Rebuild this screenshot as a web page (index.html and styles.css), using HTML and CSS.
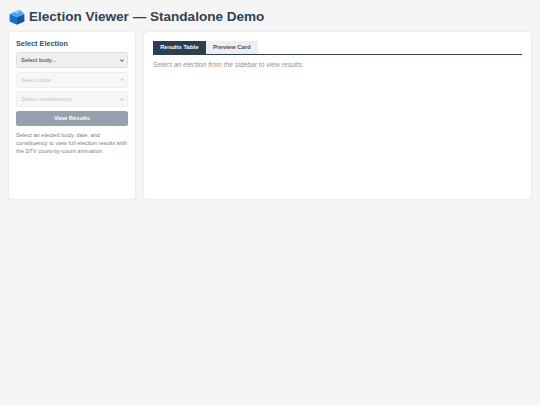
FILE: index.html
```html
<!DOCTYPE html>
<html lang="en">
<head>
<meta charset="utf-8">
<title>Election Viewer — Standalone Demo</title>
<link rel="stylesheet" href="styles.css">
</head>
<body>
<header class="page-header">
  <svg class="logo" viewBox="0 0 16 16" width="16" height="16" aria-hidden="true">
    <path d="M0.6 5 L8 8 V15.8 L0.6 12.4 Z" fill="#1a6fc9"/>
    <path d="M15.4 5 L8 8 V15.8 L15.4 12.4 Z" fill="#0f56a8"/>
    <path d="M0.6 5 L6 2.8 L8 4.6 L11 1 L15.4 5 L8 8 Z" fill="#4aa3ec"/>
    <path d="M6 2.8 L9 0.6 L11 1 L8 4.6 Z" fill="#8ed0f8"/>
  </svg>
  <h1 class="title">Election Viewer — Standalone Demo</h1>
</header>
<main class="layout">
  <aside class="card sidebar">
    <h2 class="sidebar-title">Select Election</h2>
    <select class="field"><option>Select body...</option></select>
    <select class="field" disabled><option>Select date...</option></select>
    <select class="field" disabled><option>Select constituency...</option></select>
    <button class="view-btn" disabled>View Results</button>
    <p class="help">Select an elected body, date, and constituency to view full election results with the STV count-by-count animation.</p>
  </aside>
  <section class="card content">
    <div class="tabs">
      <div class="tab tab-active">Results Table</div>
      <div class="tab">Preview Card</div>
    </div>
    <p class="placeholder">Select an election from the sidebar to view results.</p>
  </section>
</main>
</body>
</html>
```
FILE: styles.css
```css
* { box-sizing: border-box; }
html, body { height: 100%; }
body {
  margin: 0;
  padding: 9px;
  background: #f5f5f5;
  color: #2c3e50;
  font-family: "Liberation Sans", Arial, sans-serif;
}
.page-header {
  display: flex;
  align-items: center;
  gap: 4px;
  height: 16px;
  margin-bottom: 7px;
}
.logo { flex: none; }
.title {
  margin: 0;
  font-size: 13.55px;
  line-height: 16px;
  font-weight: 700;
  color: #2f4254;
}
.layout {
  display: grid;
  grid-template-columns: 126px 387px;
  gap: 9px;
  align-items: stretch;
  height: 167px;
}
.card {
  background: #fff;
  border-radius: 4px;
  box-shadow: 0 0 2px rgba(0, 0, 0, 0.12);
}
.sidebar {
  padding: 7px;
  display: flex;
  flex-direction: column;
}
.sidebar-title {
  margin: 0 0 4px;
  font-size: 7.3px;
  line-height: 9px;
  font-weight: 700;
  color: #3a4c5e;
}
.field {
  appearance: none;
  -webkit-appearance: none;
  display: block;
  width: 100%;
  height: 16px;
  margin: 0 0 3.5px;
  padding: 0 10px 0 4px;
  font-family: "Liberation Sans", Arial, sans-serif;
  font-size: 5.9px;
  border: 1px solid #e0e0e0;
  border-radius: 2.5px;
  background-color: #efefef;
  background-image: url("data:image/svg+xml,%3Csvg xmlns='http://www.w3.org/2000/svg' viewBox='0 0 8 5'%3E%3Cpath d='M1 1 L4 4 L7 1' fill='none' stroke='%23222' stroke-width='1.6'/%3E%3C/svg%3E");
  background-repeat: no-repeat;
  background-position: right 3px center;
  background-size: 4px 2.5px;
  color: #333;
}
.field:disabled {
  background-color: #f4f4f4;
  background-image: url("data:image/svg+xml,%3Csvg xmlns='http://www.w3.org/2000/svg' viewBox='0 0 8 5'%3E%3Cpath d='M1 1 L4 4 L7 1' fill='none' stroke='%23999' stroke-width='1.6'/%3E%3C/svg%3E");
  color: #aaa;
  border-color: #e8e8e8;
}
.view-btn {
  display: block;
  width: 100%;
  height: 15px;
  margin: 0 0 5px;
  padding: 0;
  border: none;
  border-radius: 2.5px;
  background: #95a1ac;
  color: #fff;
  font-family: "Liberation Sans", Arial, sans-serif;
  font-size: 5.9px;
  font-weight: 700;
}
.help {
  margin: 0;
  font-size: 5.7px;
  line-height: 8px;
  color: #808080;
}
.content { padding: 9px; }
.tabs {
  display: flex;
  border-bottom: 1px solid #2c3e50;
  height: 14px;
}
.tab {
  padding: 0 7.3px;
  font-size: 5.95px;
  font-weight: 700;
  line-height: 13px;
  background: #eee;
  color: #505050;
}
.tab-active {
  background: #2c3e50;
  color: #fff;
}
.placeholder {
  margin: 6px 0 0;
  font-size: 6.75px;
  line-height: 8px;
  font-style: italic;
  color: #929292;
}
```
